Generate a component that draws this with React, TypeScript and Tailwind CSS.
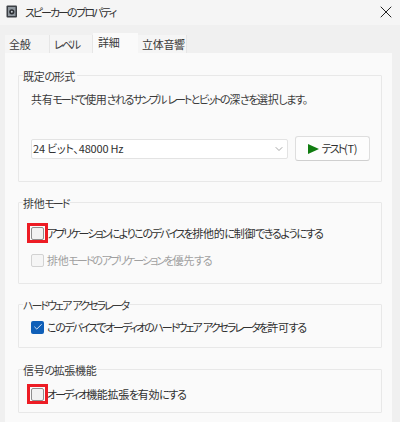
import { Check, ChevronDown, X } from "lucide-react";

const TABS = [
  { label: "全般", w: "w-[45px]" },
  { label: "レベル", w: "w-[43px]" },
  { label: "詳細", w: "w-[45px]", active: true },
  { label: "立体音響", w: "w-[49px]" },
];

// kana in the reference font is much narrower than in Noto, so tighten per script
function Jp({ text }: { text: string }) {
  const runs = text.match(/[ァ-ヶー]+|[ぁ-ん。、]+|[^ァ-ヶーぁ-ん。、]+/g) ?? [];
  return (
    <span className="whitespace-nowrap">
      {runs.map((r, i) => {
        const cls = /[ァ-ヶー]/.test(r)
          ? "tracking-[-2px]"
          : /[ぁ-ん。、]/.test(r)
            ? "tracking-[-1.4px]"
            : "tracking-[-0.3px]";
        return (
          <span key={i} className={cls}>
            {r}
          </span>
        );
      })}
    </span>
  );
}

function Group({
  title,
  h,
  children,
}: {
  title: string;
  h: string;
  children: React.ReactNode;
}) {
  return (
    <div className={`relative border border-[#e8e8e8] rounded-[1px] ${h}`}>
      <span className="absolute left-[4px] -top-[8px] bg-[#fafafa] pr-[2px] text-[11px] leading-[16px] text-[#3a3a3a]">
        <Jp text={title} />
      </span>
      {children}
    </div>
  );
}

function Box({ red, disabled }: { red?: boolean; disabled?: boolean }) {
  return (
    <span
      className={`relative shrink-0 w-[13px] h-[13px] rounded-[2px] border ${
        disabled ? "border-[#d2d2d2] bg-[#f5f5f5]" : "border-[#8e8e8e] bg-[#f2f2f2]"
      }`}
    >
      {red && (
        <span className="absolute -left-[5px] -top-[5px] w-[21px] h-[20px] border-[3px] border-[#ed1c24]" />
      )}
    </span>
  );
}

export default function App() {
  return (
    <div className="w-[400px] h-[422px] overflow-hidden bg-[#f0f0f0] flex flex-col font-['Noto_Sans_CJK_JP','Liberation_Sans',sans-serif] [font-feature-settings:'palt'] text-[11px]">
      <div className="h-[25px] bg-[#f5f5f5] flex items-center pb-[2px] pl-[6px] pr-[4px]">
        <svg width="12" height="13" viewBox="0 0 12 13" className="shrink-0">
          <rect x="0.5" y="0.5" width="10.5" height="12" rx="1" fill="#3b3f44" />
          <rect x="2" y="2" width="7.5" height="9" fill="#8f979e" />
          <circle cx="5.8" cy="6.8" r="2.6" fill="#2b2e32" />
          <circle cx="5.8" cy="6.8" r="1" fill="#c8ced3" />
        </svg>
        <span className="ml-[7px] leading-[16px] text-[#303030]">
          <Jp text="スピーカーのプロパティ" />
        </span>
        <X className="ml-auto w-[20px] h-[20px] text-[#222]" strokeWidth={1.2} />
      </div>

      <div className="h-[28px] flex items-end pl-[5px]">
        {TABS.map((t) => (
          <div
            key={t.label}
            className={`${t.w} flex items-center text-[#3a3a3a] ${
              t.active
                ? "h-[20px] bg-[#fafafa] pb-[2px] pl-[5px]"
                : "h-[18px] bg-[#f5f5f5] border-r border-[#e6e6e6] pl-[4px]"
            }`}
          >
            <Jp text={t.label} />
          </div>
        ))}
      </div>

      <div className="ml-[5px] w-[387px] flex-1 bg-[#fafafa] pt-[22px] pl-[13px] pr-[10px] flex flex-col">
        <Group title="既定の形式" h="h-[107px]">
          <p className="pt-[15px] pl-[12px] leading-[16px] text-[#3a3a3a]">
            <Jp text="共有モードで使用されるサンプル レートとビットの深さを選択します。" />
          </p>
          <div className="mt-[29px] pl-[12px] flex items-center">
            <div className="w-[257px] h-[20px] bg-white border border-[#e3e3e3] rounded-[2px] flex items-center pl-[1px] pr-[2px] text-[#303030]">
              <span className="tracking-[-0.2px]">24 ビット、48000 Hz</span>
              <ChevronDown className="ml-auto w-[12px] h-[12px] text-[#888]" strokeWidth={1.5} />
            </div>
            <div className="ml-[7px] w-[75px] h-[25px] bg-[#fdfdfd] border border-[#dedede] border-b-[#cfcfcf] rounded-[3px] flex items-center justify-center text-[#303030]">
              <span className="w-0 h-0 border-y-[5.5px] border-y-transparent border-l-[11px] border-l-[#107c10] mr-[3px]" />
              <Jp text="テスト(T)" />
            </div>
          </div>
        </Group>

        <div className="mt-[20px]">
          <Group title="排他モード" h="h-[82px]">
            <div className="pt-[22px] pl-[12px] flex items-center gap-[3px] leading-[16px] text-[#303030]">
              <Box red />
              <Jp text="アプリケーションによりこのデバイスを排他的に制御できるようにする" />
            </div>
            <div className="pt-[11px] pl-[12px] flex items-center gap-[3px] leading-[16px] text-[#a0a0a0]">
              <Box disabled />
              <Jp text="排他モードのアプリケーションを優先する" />
            </div>
          </Group>
        </div>

        <div className="mt-[20px]">
          <Group title="ハードウェア アクセラレータ" h="h-[44px]">
            <div className="pt-[14px] pl-[12px] flex items-center gap-[3px] leading-[16px] text-[#303030]">
              <span className="shrink-0 w-[13px] h-[13px] rounded-[2px] bg-[#0f5fb8] flex items-center justify-center">
                <Check className="w-[10px] h-[10px] text-white" strokeWidth={2} />
              </span>
              <Jp text="このデバイスでオーディオのハードウェア アクセラレータを許可する" />
            </div>
          </Group>
        </div>

        <div className="mt-[21px]">
          <Group title="信号の拡張機能" h="h-[44px]">
            <div className="pt-[16px] pl-[12px] flex items-center gap-[3px] leading-[16px] text-[#303030]">
              <Box red />
              <Jp text="オーディオ機能拡張を有効にする" />
            </div>
          </Group>
        </div>
      </div>
    </div>
  );
}
